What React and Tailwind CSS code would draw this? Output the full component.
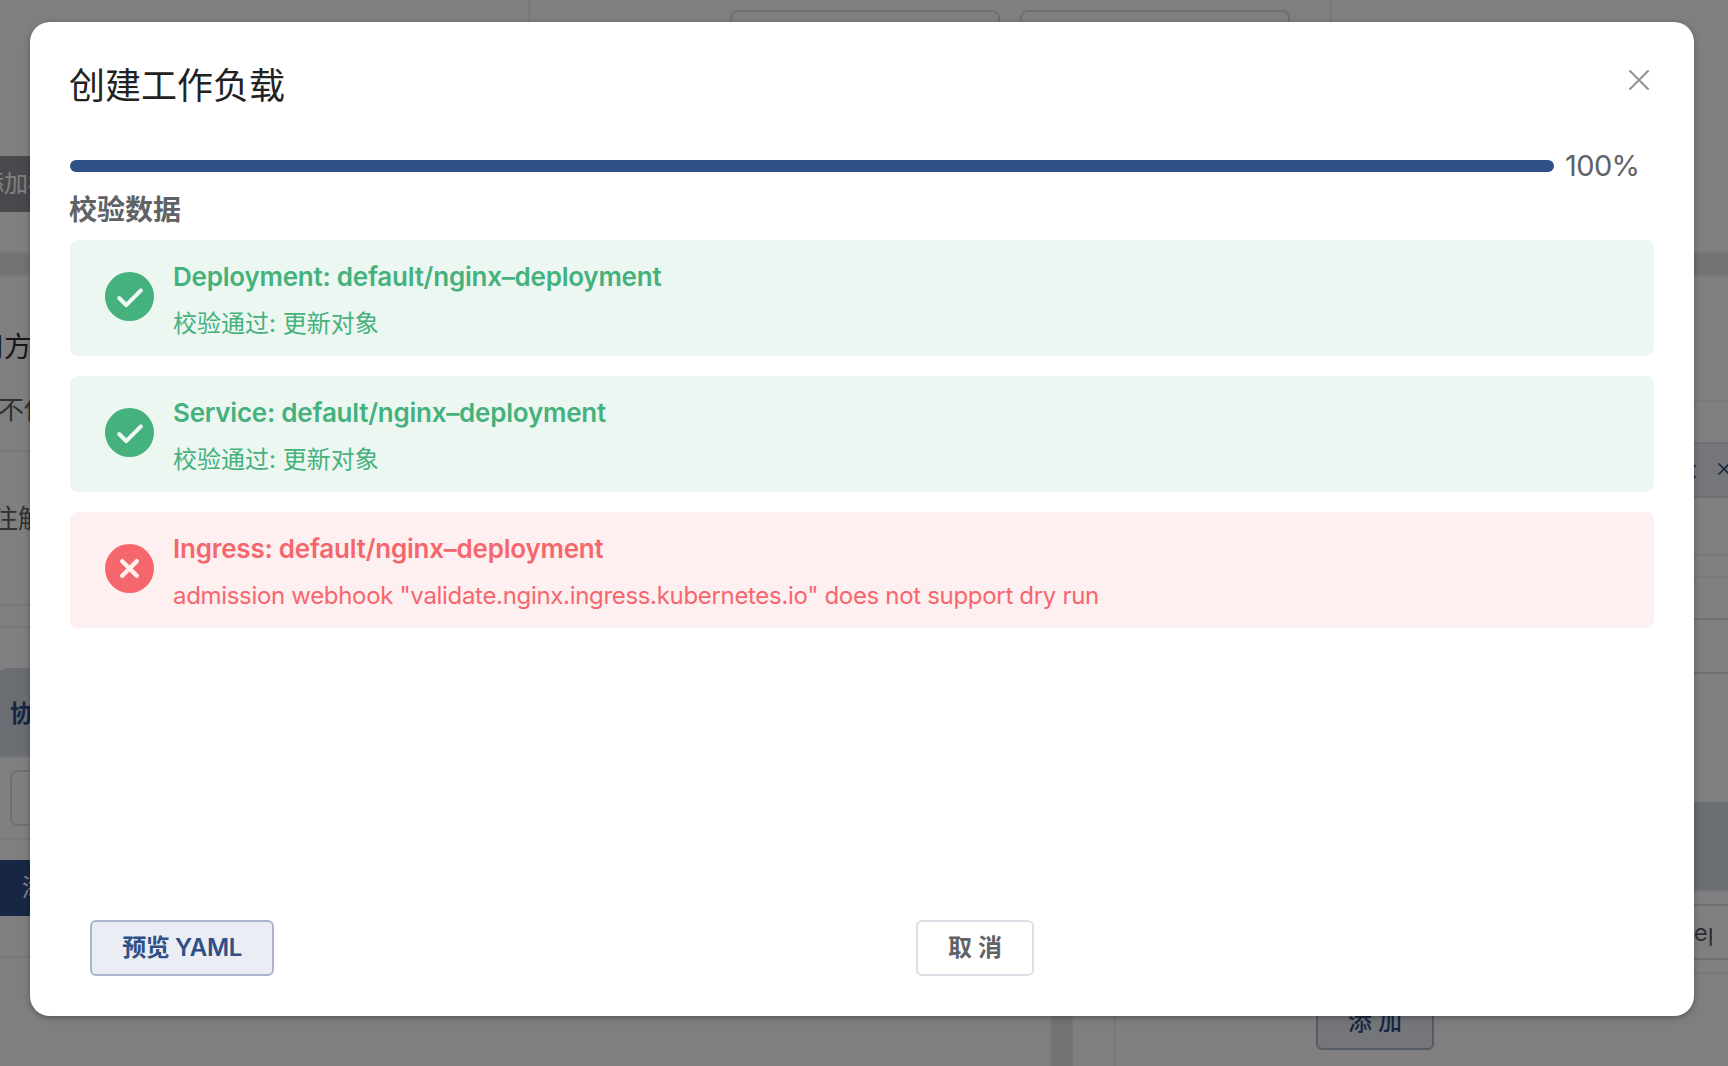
const results = [
  { ok: true, title: "Deployment: default/nginx–deployment", text: "校验通过: 更新对象" },
  { ok: true, title: "Service: default/nginx–deployment", text: "校验通过: 更新对象" },
  {
    ok: false,
    title: "Ingress: default/nginx–deployment",
    text: 'admission webhook "validate.nginx.ingress.kubernetes.io" does not support dry run',
  },
];

function StatusIcon({ ok }) {
  return (
    <svg className="mt-8 ml-[35px] size-[49px] shrink-0" viewBox="0 0 49 49" fill="none" strokeLinecap="round" strokeLinejoin="round">
      <circle cx="24.5" cy="24.5" r="24.5" fill={ok ? "#45b17c" : "#f5676d"} />
      {ok ? (
        <path d="M14.2 26 21.2 33.1 35.9 18.3" stroke="#f0f8f4" strokeWidth="4" />
      ) : (
        <path d="M17.2 17.2 31.8 31.8M31.8 17.2 17.2 31.8" stroke="#fef0f0" strokeWidth="4.4" />
      )}
    </svg>
  );
}

function ResultCard({ ok, title, text }) {
  return (
    <div className={`flex h-[116px] rounded-lg ${ok ? "bg-[#edf7f2] text-[#45b17c]" : "bg-[#feeff0] text-[#f5676d]"}`}>
      <StatusIcon ok={ok} />
      <div className="ml-[19px] pt-5 whitespace-nowrap">
        <div className="text-[26px] leading-[34px] font-semibold tracking-[-0.23px]">{title}</div>
        <div className={`mt-3 text-[24px] leading-9 ${ok ? "" : "tracking-[-0.32px]"}`}>{text}</div>
      </div>
    </div>
  );
}

function Backdrop() {
  return (
    <div className="flex h-full flex-col overflow-hidden bg-white text-[#606266]">
      <div className="flex h-[252px] shrink-0">
        <div className="w-[530px] shrink-0 border-r-2 border-[#ebeef5] pt-[156px]">
          <div className="flex h-14 w-44 items-center bg-[#909399] text-[24px] whitespace-nowrap text-white">
            <span className="-ml-5">添加标签</span>
          </div>
        </div>
        <div className="flex w-[802px] shrink-0 gap-5 border-r-2 border-[#ebeef5] pt-2.5 pl-[200px]">
          <div className="h-14 w-[270px] rounded-lg border-2 border-[#dcdfe6]" />
          <div className="h-14 w-[270px] rounded-lg border-2 border-[#dcdfe6]" />
        </div>
      </div>
      <div className="h-6 shrink-0 border-y-2 border-[#ebeef5] bg-[#e4e6ea]" />
      <div className="flex grow">
        <div className="w-[1050px] shrink-0 whitespace-nowrap">
          <div className="h-[176px] border-b-2 border-[#ebeef5]">
            <div className="-ml-6 pt-[51px] text-[28px] leading-10 text-[#303133]">用方式</div>
            <div className="-ml-0.5 pt-[25px] text-[26px] leading-9">不使用</div>
          </div>
          <div className="-ml-2 h-[154px] border-b-2 border-[#ebeef5] pt-[47px] text-[26px] leading-10">注解</div>
          <div className="h-[22px] border-b-2 border-[#ebeef5]" />
          <div className="mt-10 -ml-1 flex h-[90px] items-center rounded-tl-xl border-b-2 border-[#ebeef5] bg-[#d5dae2] pt-1 pl-3.5 text-[24px] font-bold text-[#2f4f87]">协议</div>
          <div className="h-[82px] border-b-2 border-[#ebeef5] pt-3 pl-2.5">
            <div className="h-14 w-80 rounded-lg border-2 border-[#dcdfe6]" />
          </div>
          <div className="mt-5 flex h-14 items-center bg-[#2f4f87] pl-[22px] text-[24px] text-white">添加</div>
          <div className="h-[42px] border-b-2 border-[#ebeef5]" />
        </div>
        <div className="w-[23px] shrink-0 border-x-2 border-[#ebeef5] bg-[#e4e6ea]" />
        <div className="w-[43px] shrink-0 border-r-2 border-[#ebeef5]" />
        <div className="min-w-0 grow overflow-hidden">
          <div className="h-[126px] border-b-2 border-[#ebeef5]" />
          <div className="mt-10 flex h-14 items-center justify-end border-y-2 border-[#dcdfe6] bg-[#eaedf3] text-[#2f4f87]">
            <span className="text-[24px] leading-none">nginx</span>
            <svg className="mr-[-3px] ml-[20px] size-3.5" viewBox="0 0 14 14" stroke="currentColor" strokeWidth="1.6"><path d="M1.5 0.5 12.5 11.5M12.5 0.5 1.5 11.5" /></svg>
          </div>
          <div className="h-[58px] border-b-2 border-[#ebeef5]" />
          <div className="h-[22px] border-b-2 border-[#ebeef5]" />
          <div className="h-[42px] border-b-2 border-[#dcdfe6]" />
          <div className="h-[54px] border-b-2 border-[#dcdfe6]" />
          <div className="mt-32 h-[90px] border-b-2 border-[#ebeef5] bg-[#d5dae2]" />
          <div className="h-[82px] border-b-2 border-[#ebeef5] pt-3">
            <div className="flex h-14 items-center justify-end border-y-2 border-[#dcdfe6] pt-0.5 pr-4 text-[24px]">
              <span className="w-[33px] overflow-hidden">dep</span>
            </div>
          </div>
          <div className="mt-5 ml-[200px] flex h-14 w-[118px] items-center justify-center gap-1.5 rounded-md border-2 border-[#abb6ce] bg-[#eaedf3] text-[24px] font-medium text-[#2f4f87]">
            <span>添</span>
            <span>加</span>
          </div>
        </div>
      </div>
    </div>
  );
}

export default function App() {
  return (
    <div className="relative h-[1066px] w-[1728px] overflow-hidden font-['Inter','Noto_Sans_CJK_SC',sans-serif]">
      <Backdrop />
      <div className="absolute inset-0 bg-black/50 pt-[22px] pl-[30px]">
        <div className="flex h-[994px] w-[1664px] flex-col rounded-[20px] bg-white px-10 shadow-[0_2px_6px_rgba(0,0,0,0.3)]">
          <div className="flex justify-between pt-[38px]">
            <h1 className="-ml-px text-[36px] leading-[52px] text-[#222]">创建工作负载</h1>
            <svg className="mt-2.5 mr-[5px] size-5" viewBox="0 0 20 20" stroke="#909399" strokeWidth="2" strokeLinecap="round"><path d="M1 1 19 19M19 1 1 19" /></svg>
          </div>
          <div className="mt-9 flex h-9 items-center">
            <div className="h-3 w-[1484px] rounded-full bg-[#2f4f87]" />
            <span className="ml-[11px] text-[29px] tracking-[-0.6px] text-[#606266]">100%</span>
          </div>
          <div className="mt-[9px] -ml-px h-[47px] text-[28px] leading-[34px] font-bold text-[#606266]">校验数据</div>
          <div className="flex flex-col gap-5">
            {results.map((r) => (
              <ResultCard key={r.title} {...r} />
            ))}
          </div>
          <div className="mt-auto mb-10 flex pl-5 text-[24px] font-semibold">
            <button className="h-14 w-[184px] rounded-md border-2 border-[#abb6ce] bg-[#eaedf3] tracking-[-0.4px] text-[#2f4f87]">预览 YAML</button>
            <button className="ml-[642px] flex h-14 w-[118px] items-center justify-center gap-1.5 rounded-md border-2 border-[#dcdfe6] text-[#606266]">
              <span>取</span>
              <span>消</span>
            </button>
          </div>
        </div>
      </div>
    </div>
  );
}
